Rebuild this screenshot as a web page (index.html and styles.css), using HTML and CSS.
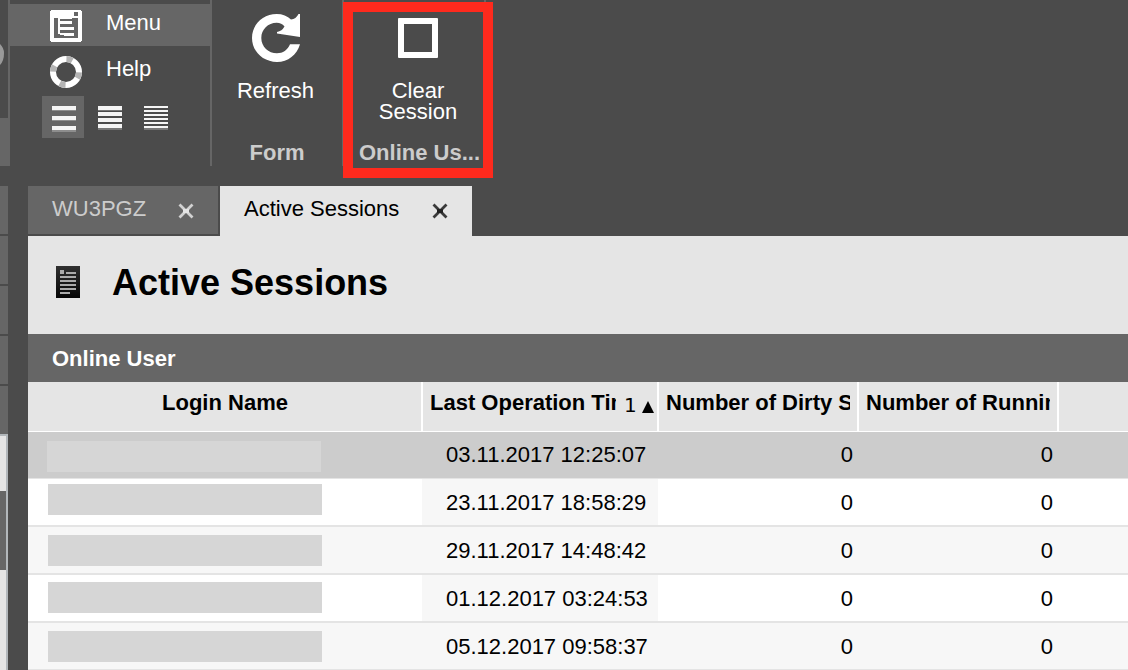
FILE: index.html
```html
<!DOCTYPE html>
<html lang="en">
<head>
<meta charset="utf-8">
<title>Active Sessions</title>
<link rel="stylesheet" href="styles.css">
</head>
<body>
<div class="app">
  <header class="ribbon">
    <div class="edge">
      <svg class="edge-top" width="8" height="118" viewBox="0 0 8 118"><path d="M0 44Q4 48 4 53Q4 61 0 65Z" fill="#999"/></svg>
      <div class="edge-foot"></div>
    </div>
    <nav class="menu">
      <div class="menu-item selected">
        <svg width="32" height="32" viewBox="0 0 32 32" shape-rendering="crispEdges">
          <path d="M1 0H31V1H32V31H31V32H1V31H0V1H1Z" fill="#fff"/>
          <path d="M24 2h4v4h-4zM4 8h24v20H4z" fill="#666"/>
          <path d="M8 8h2v16H8zM10 8h12v1H10zM10 11h12v3H10zM10 17h14v3H10zM10 23h14v3H14v-1h-4z" fill="#fff"/>
        </svg>
        <span>Menu</span>
      </div>
      <div class="menu-item">
        <svg width="32" height="32" viewBox="0 0 32 32" fill="none" stroke-width="6">
          <circle cx="16" cy="16" r="13" stroke="#fff"/>
          <circle cx="16" cy="16" r="13" stroke="#b4b4b4" pathLength="360" stroke-dasharray="27 63" stroke-dashoffset="-2"/>
        </svg>
        <span>Help</span>
      </div>
      <div class="density">
        <div class="density-btn on"><svg width="24" height="26" shape-rendering="crispEdges"><path d="M0 0h24v4H0zM0 10h24v4H0zM0 20h24v4H0z" fill="#f5f5f5"/><path d="M0 4h24v1H0zM0 14h24v1H0zM0 24h24v2H0z" fill="#8d8d8d"/></svg></div>
        <div class="density-btn"><svg width="24" height="26" shape-rendering="crispEdges"><path d="M0 0h24v4H0zM0 6h24v4H0zM0 12h24v4H0zM0 18h24v4H0z" fill="#f5f5f5"/><path d="M0 4h24v1H0zM0 22h24v2H0z" fill="#777"/></svg></div>
        <div class="density-btn"><svg width="24" height="26" shape-rendering="crispEdges"><path d="M0 0h24v2H0zM0 4h24v2H0zM0 8h24v2H0zM0 12h24v2H0zM0 16h24v2H0zM0 20h24v2H0z" fill="#f5f5f5"/><path d="M0 22h24v2H0z" fill="#777"/></svg></div>
      </div>
    </nav>
    <section class="group form-group">
      <svg class="refresh" width="48" height="48" viewBox="0 0 48 48"><path d="M48 30.300C45 41 36 48 25 48C11 48 0 37.500 0 24C0 10.500 11 0 24.700 0C30.500 0 35.500 2 39 5.500Q44 5 46.500 0H48V23L25 19.500V18Q30 17 32.500 12.500C30.500 10 28 8.800 24.700 8.800C16 8.800 9.300 15.500 9.300 24C9.300 32.700 16.500 39.300 25 39.300C30.800 39.300 35.800 36 38 30.300Z" fill="#fff"/></svg>
      <div class="action">Refresh</div>
      <div class="caption">Form</div>
    </section>
    <section class="group user-group">
      <div class="square"></div>
      <div class="action">Clear<br>Session</div>
      <div class="caption">Online Us...</div>
      <div class="highlight"></div>
    </section>
  </header>
  <div class="body">
    <aside class="side">
      <div class="side-row"></div><div class="side-row"></div><div class="side-row"></div><div class="side-row"></div><div class="side-row last"></div>
      <div class="scroll"><div class="thumb"></div></div>
    </aside>
    <main class="main">
      <div class="tabs">
        <div class="tab"><span>WU3PGZ</span><svg width="16" height="16" viewBox="0 0 16 16"><path d="M1.500 1.500L14.500 14.500M14.500 1.500L1.500 14.500" stroke="#d2d2d2" stroke-width="2.800"/><path d="M5 6h6v4H5z" fill="#e5e5e5"/></svg></div>
        <div class="tab active"><span>Active Sessions</span><svg width="16" height="16" viewBox="0 0 16 16"><path d="M1.500 1.500L14.500 14.500M14.500 1.500L1.500 14.500" stroke="#3a3a3a" stroke-width="2.800"/><path d="M5 6h6v4H5z" fill="#222"/></svg></div>
      </div>
      <div class="heading">
        <svg width="24" height="32" viewBox="0 0 24 32" shape-rendering="crispEdges"><defs><linearGradient id="g" x1="0" y1="0" x2="0" y2="1"><stop offset="0" stop-color="#303030"/><stop offset="1" stop-color="#050505"/></linearGradient></defs><path fill="url(#g)" d="M0 0h24v32H0z"/><path d="M4 4h4v4H4zM10 6h10v2H10zM4 10h16v2H4zM4 14h16v2H4zM4 18h16v2H4zM4 22h16v2H4zM4 26h10v2H4z" fill="#aaa"/></svg>
        <h1>Active Sessions</h1>
      </div>
      <h2 class="section">Online User</h2>
      <div class="row head">
        <div class="cell name">Login Name</div>
        <div class="cell"><span class="clip">Last Operation Time</span><span class="order">1</span><svg width="12" height="12" viewBox="0 0 12 12"><path d="M6 0L12 12H0Z"/></svg></div>
        <div class="cell"><span class="clip">Number of Dirty Sessions</span></div>
        <div class="cell"><span class="clip">Number of Running Sessions</span></div>
        <div class="cell rest"></div>
      </div>
      <div class="row first"><div class="login"><i></i></div><div class="time">03.11.2017 12:25:07</div><div class="num">0</div><div class="num">0</div></div>
      <div class="row"><div class="login up"><i></i></div><div class="time">23.11.2017 18:58:29</div><div class="num">0</div><div class="num">0</div></div>
      <div class="row alt"><div class="login"><i></i></div><div class="time">29.11.2017 14:48:42</div><div class="num">0</div><div class="num">0</div></div>
      <div class="row"><div class="login mid"><i></i></div><div class="time">01.12.2017 03:24:53</div><div class="num">0</div><div class="num">0</div></div>
      <div class="row alt"><div class="login"><i></i></div><div class="time">05.12.2017 09:58:37</div><div class="num">0</div><div class="num">0</div></div>
    </main>
  </div>
</div>
</body>
</html>
```

FILE: styles.css
```css
* { box-sizing: border-box; }
body { margin: 0; font: 22px/24px "Liberation Sans", Arial, sans-serif; color: #000; }
svg { display: block; flex: none; }
.app { width: 1128px; height: 670px; overflow: hidden; background: #4b4b4b; display: flex; flex-direction: column; }

.ribbon { height: 186px; flex: none; display: flex; align-items: flex-start; color: #fff; }
.edge { width: 10px; height: 166px; border-right: 2px solid #666; }
.edge-foot { width: 8px; height: 48px; background: #666; }
.menu { width: 202px; height: 166px; padding-top: 4px; border-right: 2px solid #666; }
.menu-item { height: 42px; padding: 6px 0 0 40px; display: flex; gap: 24px; }
.menu-item + .menu-item { height: 50px; padding-top: 10px; }
.menu-item span { line-height: 25px; }
.selected { background: #666; }
.density { display: flex; gap: 4px; padding-left: 32px; }
.density-btn { width: 42px; height: 42px; padding: 10px 0 0 10px; }
.density-btn.on { background: #666; }
.group { position: relative; height: 166px; display: flex; flex-direction: column; align-items: center; text-align: center; }
.form-group { width: 132px; border-right: 2px solid #666; }
.user-group { width: 142px; border-right: 2px solid #666; }
.refresh { margin: 14px 2px 0 0; }
.action { line-height: 21px; height: 42px; }
.form-group .action { margin: 18px 3px 0 0; }
.caption { margin-top: 18px; font-weight: bold; color: #ccc; white-space: nowrap; }
.form-group .caption { margin-top: 19px; }
.square { width: 40px; height: 40px; margin: 18px 0 0 8px; border: 6px solid #fff; border-radius: 1px; }
.user-group .action { margin: 22px 0 0 8px; }
.user-group .caption { margin-left: 11px; margin-top: 19px; }
.highlight { position: absolute; left: -1px; top: 2px; width: 150px; height: 176px; border: 10px solid #fe2a1d; }

.body { flex: 1; min-height: 0; display: flex; gap: 20px; }
.side { width: 8px; flex: none; display: flex; flex-direction: column; }
.side-row { height: 50px; flex: none; background: #666; border-bottom: 2px solid #4b4b4b; }
.side-row.last { height: 48px; border: 0; }
.scroll { flex: 1; background: #e5e5e5; border: solid #b2b7bb; border-width: 2px 2px 0 0; padding-top: 55px; }
.thumb { height: 79px; background: #666; }

.main { width: 1100px; height: 484px; overflow: hidden; background: #fff; }
.tabs { height: 50px; display: flex; background: #4b4b4b; }
.tab { width: 192px; padding: 10px 0 0 24px; background: #666; border: solid #4b4b4b; border-width: 0 2px 2px 0; color: #ccc; display: flex; }
.tab svg { margin: 7px 24px 0 auto; }
.tab span { line-height: 26px; height: 26px; }
.tab.active { width: 252px; background: #e5e5e5; color: #000; border: 0; }
.heading { height: 98px; padding: 29px 0 0 28px; background: #e5e5e5; display: flex; gap: 32px; }
.heading svg { margin-top: 1px; }
h1 { margin: 0; font-size: 36px; line-height: 36px; }
.section { height: 48px; margin: 0; padding: 12px 24px; font-size: 22px; line-height: 26px; color: #fff; background: #666; }

.row { height: 48px; display: grid; grid-template-columns: 394px 236px 200px 200px 1fr; border-bottom: 2px solid #e4e4e4; }
.head { height: 50px; background: #e5e5e5; border-bottom: 1px solid #fff; font-weight: bold; }
.cell { display: flex; border-right: 2px solid #fff; margin-right: -1px; padding: 8px 7px 0 8px; line-height: 26px; white-space: nowrap; min-width: 0; }
.cell.name { justify-content: center; }
.cell.rest { border: 0; }
.clip { flex: 1; min-width: 0; height: 28px; overflow: hidden; }
.order { width: 26px; padding: 1px 0 0 8px; font: 20px/28px "DejaVu Sans", sans-serif; }
.head svg { margin: 11px -4px 0 0; }
.first { height: 47px; background: #ccc; border-bottom-width: 1px; }
.alt, .time { background: #f7f7f7; }
.time { padding: 12px 0 0 24px; white-space: nowrap; }
.num { padding: 12px 5px 0 0; text-align: right; }
.first .time { background: #ccc; padding-top: 11px; }
.first .num { padding-top: 11px; }
.login { padding: 8px 0 0 20px; }
.login i { display: block; width: 274px; height: 31px; background: #d6d6d6; }
.first .login { padding: 9px 0 0 19px; }
.login.up { padding-top: 5px; }
.login.mid { padding-top: 7px; }
```
